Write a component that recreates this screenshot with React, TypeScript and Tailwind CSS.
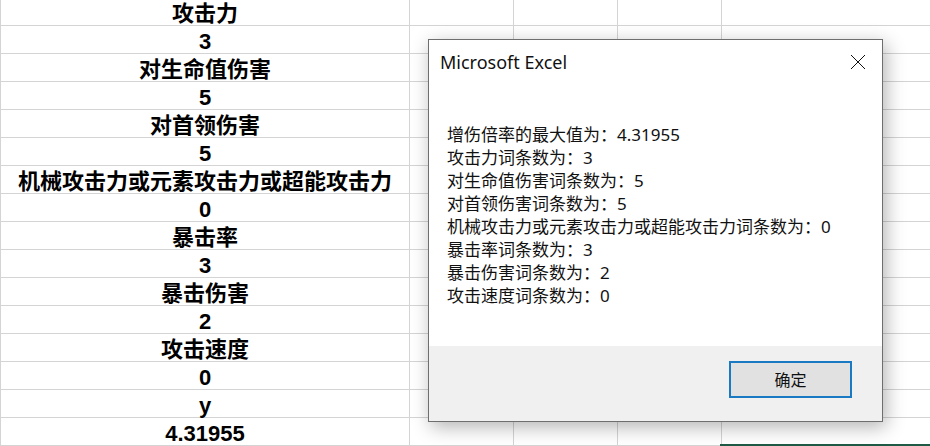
const rows = [
  '攻击力',
  '3',
  '对生命值伤害',
  '5',
  '对首领伤害',
  '5',
  '机械攻击力或元素攻击力或超能攻击力',
  '0',
  '暴击率',
  '3',
  '暴击伤害',
  '2',
  '攻击速度',
  '0',
  'y',
  '4.31955',
];

const lines = [
  '增伤倍率的最大值为：4.31955',
  '攻击力词条数为：3',
  '对生命值伤害词条数为：5',
  '对首领伤害词条数为：5',
  '机械攻击力或元素攻击力或超能攻击力词条数为：0',
  '暴击率词条数为：3',
  '暴击伤害词条数为：2',
  '攻击速度词条数为：0',
];

function CloseIcon() {
  return (
    <svg width="16" height="16" viewBox="0 0 16 16" fill="none" stroke="#111" strokeWidth="1">
      <path d="M1 1 L15 15 M15 1 L1 15" />
    </svg>
  );
}

function MessageBox() {
  return (
    <div className="absolute left-[428px] top-[39px] flex h-[383px] w-[455px] flex-col border border-[#6e6e6e] bg-white shadow-[3px_5px_18px_rgba(0,0,0,0.3)] font-['Noto_Sans','Noto_Sans_CJK_SC',sans-serif] text-[#111]">
      <div className="flex h-[44px] items-center justify-between pl-[11px] pr-[16px]">
        <span className="text-[18px]">Microsoft Excel</span>
        <CloseIcon />
      </div>
      <div className="pl-[18px] pt-[39px] text-[17px] leading-[23px]">
        {lines.map((l) => (
          <p key={l}>{l}</p>
        ))}
      </div>
      <div className="mt-auto flex h-[75px] items-start justify-end bg-[#f0f0f0] pr-[30px] pt-[15px]">
        <button className="flex h-[37px] w-[123px] items-center justify-center border-2 border-[#1979c3] bg-[#e1e1e1] text-[16px]">
          确定
        </button>
      </div>
    </div>
  );
}

export default function App() {
  return (
    <div className="relative h-[446px] w-[930px] overflow-hidden bg-white">
      <div className="-mt-[2px] grid grid-cols-[409px_104px_104px_104px_1fr] border-l border-[#d4d4d4]">
        {rows.map((r, i) => (
          <div key={i} className="contents">
            <div className="flex h-[28px] items-center justify-center border-b border-r border-[#d4d4d4] pt-[5px] text-[22px] font-bold leading-[22px] text-black font-['Liberation_Sans','Noto_Sans_CJK_SC',sans-serif]">
              {r}
            </div>
            <div className="h-[28px] border-b border-r border-[#d4d4d4]" />
            <div className="h-[28px] border-b border-r border-[#d4d4d4]" />
            <div className="h-[28px] border-b border-r border-[#d4d4d4]" />
            <div className="h-[28px] border-b border-[#d4d4d4]" />
          </div>
        ))}
      </div>
      <div className="absolute bottom-0 left-[720px] right-0 h-[2px] bg-[#1e5a45]" />
      <MessageBox />
    </div>
  );
}
